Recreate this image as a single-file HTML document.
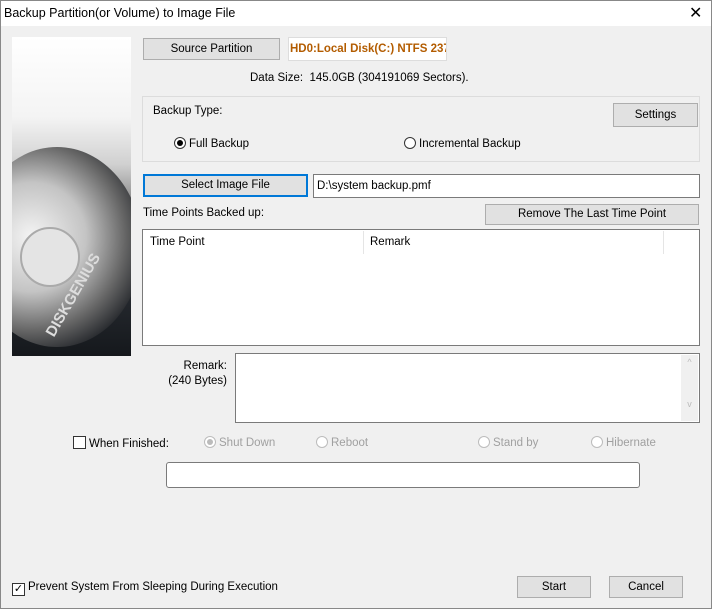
<!DOCTYPE html>
<html><head><style>
*{box-sizing:border-box;margin:0;padding:0}
body{width:712px;height:609px;background:#f0f0f0;font-family:"Liberation Sans",sans-serif;font-size:11.5px;color:#000;position:relative;overflow:hidden}
.a{position:absolute;white-space:nowrap}
.btn{position:absolute;background:#e1e1e1;border:1px solid #adadad;text-align:center}
.box{position:absolute;background:#fff;border:1px solid #7a7a7a}
.rad{display:inline-block;width:12px;height:12px;border:1px solid #333;border-radius:50%;vertical-align:-2px;margin-right:3px;background:#fff;position:relative}
.dis{color:#a0a0a0}.dis .rad{border-color:#bcbcbc}
</style></head><body>
<div class="a" style="left:0;top:0;width:712px;height:609px;border:1px solid #888"></div>
<div class="a" style="left:1px;top:1px;width:710px;height:25px;background:#fff"></div>
<div class="a" style="left:4px;top:6px;font-size:12.5px">Backup Partition(or Volume) to Image File</div>
<div class="a" style="left:689px;top:3px;font-size:16px">✕</div>

<div class="a" style="left:12px;top:37px;width:119px;height:319px;background:linear-gradient(#fff 0%,#f4f4f4 25%,#d0d0d0 40%,#777 55%,#2a2e34 75%,#15181c 100%);overflow:hidden">
  <div class="a" style="left:-40px;top:110px;width:170px;height:200px;border-radius:50%;background:radial-gradient(circle at 35% 45%,#f4f4f4 0%,#c4c4c4 35%,#666 60%,#1a1d22 80%)"></div>
  <div class="a" style="left:8px;top:190px;width:60px;height:60px;border-radius:50%;background:#e4e4e4;border:2px solid #aaa"></div>
  <div class="a" style="left:38px;top:290px;color:#ddd;font-weight:bold;font-size:15px;transform:rotate(-60deg);transform-origin:left">DISKGENIUS</div>
</div>

<div class="btn" style="left:143px;top:38px;width:137px;height:22px;line-height:20px">Source Partition</div>
<div class="a" style="left:288px;top:37px;width:159px;height:24px;background:#fff;border:1px solid #ddd;color:#b35c00;font-weight:bold;padding:5px 0 0 1px;overflow:hidden;font-size:11.5px">HD0:Local Disk(C:) NTFS 237.</div>
<div class="a" style="left:250px;top:72px">Data Size:&nbsp; 145.0GB (304191069 Sectors).</div>

<div class="a" style="left:142px;top:96px;width:558px;height:66px;border:1px solid #dcdcdc"></div>
<div class="a" style="left:153px;top:105px">Backup Type:</div>
<div class="btn" style="left:613px;top:103px;width:85px;height:24px;line-height:22px">Settings</div>
<div class="a" style="left:174px;top:137px"><span class="rad"><span style="position:absolute;left:2px;top:2px;width:6px;height:6px;border-radius:50%;background:#000"></span></span>Full Backup</div>
<div class="a" style="left:404px;top:137px"><span class="rad"></span>Incremental Backup</div>

<div class="btn" style="left:143px;top:174px;width:165px;height:23px;line-height:19px;border:2px solid #0078d7">Select Image File</div>
<div class="box" style="left:313px;top:174px;width:387px;height:24px;padding:5px 3px">D:\system backup.pmf</div>
<div class="a" style="left:143px;top:207px">Time Points Backed up:</div>
<div class="btn" style="left:485px;top:204px;width:214px;height:21px;line-height:19px">Remove The Last Time Point</div>

<div class="box" style="left:142px;top:229px;width:558px;height:117px"></div>
<div class="a" style="left:150px;top:236px">Time Point</div>
<div class="a" style="left:363px;top:231px;width:1px;height:23px;background:#e5e5e5"></div>
<div class="a" style="left:370px;top:236px">Remark</div>
<div class="a" style="left:663px;top:231px;width:1px;height:23px;background:#e5e5e5"></div>

<div class="a" style="left:160px;top:360px;text-align:right;width:67px">Remark:</div>
<div class="a" style="left:160px;top:375px;text-align:right;width:67px">(240 Bytes)</div>
<div class="box" style="left:235px;top:353px;width:465px;height:70px"></div>
<div class="a" style="left:681px;top:355px;width:17px;height:66px;background:#f0f0f0;color:#bbb;font-size:9px;text-align:center;line-height:14px">^<br><br><br>v</div>

<div class="a" style="left:73px;top:436px"><span style="display:inline-block;width:13px;height:13px;border:1px solid #333;background:#fff;vertical-align:-2px;margin-right:3px"></span>When Finished:</div>
<div class="a dis" style="left:204px;top:436px"><span class="rad"><span style="position:absolute;left:2px;top:2px;width:6px;height:6px;border-radius:50%;background:#bbb"></span></span>Shut Down</div>
<div class="a dis" style="left:316px;top:436px"><span class="rad"></span>Reboot</div>
<div class="a dis" style="left:478px;top:436px"><span class="rad"></span>Stand by</div>
<div class="a dis" style="left:591px;top:436px"><span class="rad"></span>Hibernate</div>

<div class="a" style="left:166px;top:462px;width:474px;height:26px;background:#fff;border:1px solid #7a7a7a;border-radius:3px"></div>

<div class="a" style="left:12px;top:581px"><span style="display:inline-block;width:13px;height:13px;border:1px solid #333;background:#fff;vertical-align:-2px;margin-right:3px;font-size:11px;line-height:11px;text-align:center">✓</span>Prevent System From Sleeping During Execution</div>
<div class="btn" style="left:517px;top:576px;width:74px;height:22px;line-height:20px">Start</div>
<div class="btn" style="left:609px;top:576px;width:74px;height:22px;line-height:20px">Cancel</div>
</body></html>
